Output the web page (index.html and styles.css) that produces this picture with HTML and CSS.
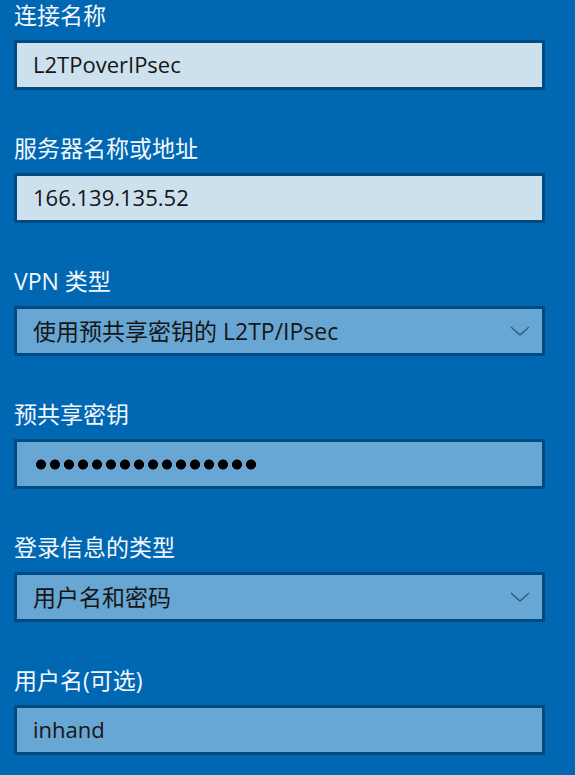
FILE: index.html
```html
<!DOCTYPE html>
<html lang="zh-CN">
<head>
    <meta charset="UTF-8">
    <meta name="viewport" content="width=device-width, initial-scale=1.0">
    <title>VPN 连接</title>
    <link rel="stylesheet" href="styles.css">
</head>
<body>
    <div class="vpn-form">
        <div class="field">
            <div class="label">连接名称</div>
            <div class="box box-light">L2TPoverIPsec</div>
        </div>
        <div class="field">
            <div class="label">服务器名称或地址</div>
            <div class="box box-light">166.139.135.52</div>
        </div>
        <div class="field">
            <div class="label">VPN 类型</div>
            <div class="box select">
                <span>使用预共享密钥的 L2TP/IPsec</span>
                <svg class="chevron" width="20" height="10" viewBox="0 0 20 10"><path d="M1 1 L10 9 L19 1" fill="none" stroke="#2d5d85" stroke-width="1.5"/></svg>
            </div>
        </div>
        <div class="field">
            <div class="label">预共享密钥</div>
            <div class="box"><span class="dots"></span></div>
        </div>
        <div class="field">
            <div class="label">登录信息的类型</div>
            <div class="box select">
                <span>用户名和密码</span>
                <svg class="chevron" width="20" height="10" viewBox="0 0 20 10"><path d="M1 1 L10 9 L19 1" fill="none" stroke="#2d5d85" stroke-width="1.5"/></svg>
            </div>
        </div>
        <div class="field">
            <div class="label">用户名(可选)</div>
            <div class="box">inhand</div>
        </div>
    </div>
</body>
</html>
```

FILE: styles.css
```css
body {
    margin: 0;
    padding: 0;
    background-color: #0067b3;
    font-family: "Open Sans", "Noto Sans CJK SC", sans-serif;
    overflow: hidden;
}
.vpn-form {
    padding: 0 0 0 14px;
    width: 531px;
}
.field {
    margin-bottom: 43px;
}
.label {
    color: #f4f8fc;
    font-size: 23px;
    line-height: 30px;
    margin-bottom: 10px;
}
.box {
    box-sizing: border-box;
    height: 50px;
    border: 3px solid #004a80;
    background-color: #68a6d3;
    color: #161616;
    font-size: 22px;
    padding: 0 16px 3px;
    display: flex;
    align-items: center;
}
.box-light {
    background-color: #cde0ee;
}
.select {
    justify-content: space-between;
}
.select span {
    font-size: 23px;
}
.chevron {
    margin: 3px -4px 0 0;
}
/* 16 password dots */
.dots {
    display: block;
    width: 224px;
    height: 11px;
    margin: 3px 0 0 1px;
    background: radial-gradient(circle, #000 4.6px, transparent 5.4px) 0 0 / 14px 11px repeat-x;
}
```
